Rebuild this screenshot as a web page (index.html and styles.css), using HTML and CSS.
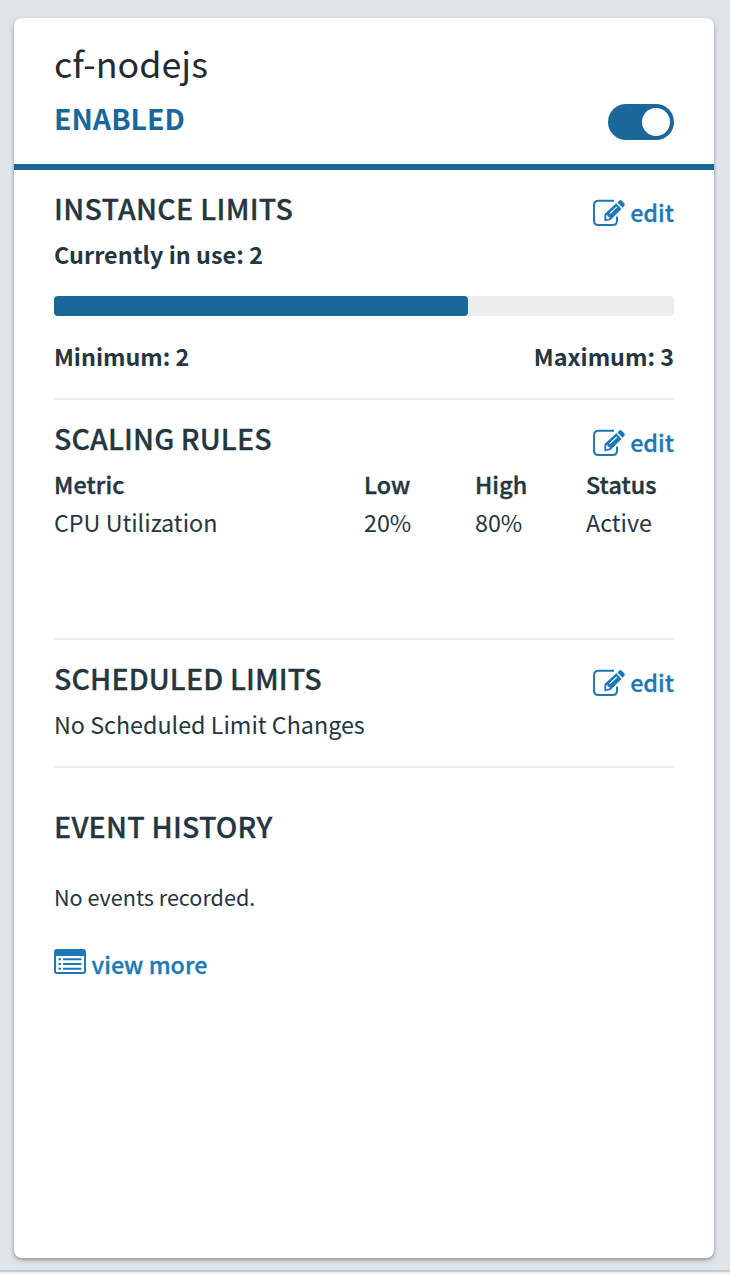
FILE: index.html
```html
<!DOCTYPE html>
<html lang="en">
<head>
<meta charset="utf-8">
<title>cf-nodejs</title>
<link rel="stylesheet" href="styles.css">
</head>
<body>
<svg class="sprite" width="0" height="0">
  <symbol id="edit" viewBox="0 0 34 28">
    <path d="M23 1.800H7.500Q3 1.800 3 6.300V21.500Q3 26 7.500 26H21.500Q26 26 26 21.500V17.500" fill="none" stroke="currentColor" stroke-width="2"/>
    <path fill="currentColor" fill-rule="evenodd" d="M13.500 15L25.300 4.300L30.500 9.900L19.500 20.900L13.300 22.300ZM16 15.500L15.200 17V20.300L18.400 19.500L18.900 18.300L17 17.700ZM18.300 14.300L19.100 15.100L26.300 8.200L25.500 7.400Z"/>
    <path fill="currentColor" d="M26.400 3.400L28.300 1.600Q29.600 .5 31 1.900L33.200 4.200Q34.300 5.600 33.200 6.900L31.600 8.800Z"/>
  </symbol>
</svg>
<main class="card">
  <header class="header">
    <h1 class="title">cf-nodejs</h1>
    <div class="state-row">
      <span class="state">ENABLED</span>
      <span class="toggle"><span class="knob"></span></span>
    </div>
  </header>
  <section class="section limits">
    <div class="heading-row"><h2 class="heading h-instance">INSTANCE LIMITS</h2><a class="edit"><svg class="edit-icon"><use href="#edit"/></svg><span>edit</span></a></div>
    <p class="bold use">Currently in use: 2</p>
    <div class="bar"><div class="fill"></div></div>
    <div class="range bold"><span>Minimum: 2</span><span>Maximum: 3</span></div>
  </section>
  <section class="section rules">
    <div class="heading-row"><h2 class="heading">SCALING RULES</h2><a class="edit"><svg class="edit-icon"><use href="#edit"/></svg><span>edit</span></a></div>
    <div class="grid semi"><span>Metric</span><span>Low</span><span>High</span><span>Status</span></div>
    <div class="grid"><span>CPU Utilization</span><span>20%</span><span>80%</span><span>Active</span></div>
  </section>
  <section class="section scheduled">
    <div class="heading-row"><h2 class="heading">SCHEDULED LIMITS</h2><a class="edit"><svg class="edit-icon"><use href="#edit"/></svg><span>edit</span></a></div>
    <p>No Scheduled Limit Changes</p>
  </section>
  <section class="events">
    <h2 class="heading h-events">EVENT HISTORY</h2>
    <p class="empty">No events recorded.</p>
    <a class="more"><svg class="list-icon" viewBox="0 0 32 25">
      <path fill="currentColor" fill-rule="evenodd" d="M3 0H29Q32 0 32 3V22Q32 25 29 25H3Q0 25 0 22V3Q0 0 3 0ZM2 7V22Q2 23 3 23H29Q30 23 30 22V7Z"/>
      <path d="M9 10.200H27.500M9 15H27.500M9 19.800H27.500" stroke="currentColor" stroke-width="2"/>
      <path d="M4.500 10.200H7M4.500 15H7M4.500 19.800H7" stroke="currentColor" stroke-width="2"/>
    </svg><span>view more</span></a>
  </section>
</main>
</body>
</html>
```
FILE: styles.css
```css
* { box-sizing: border-box; }
body {
  margin: 0;
  height: 1274px;
  padding: 18px 16px 0 14px;
  background: linear-gradient(#dfe4e8 0 1270px, #c9cbcd 1270px 1272px, #f1f1f1 1272px);
  color: #243640;
  font: 400 23.3px/38px "Noto Sans CJK SC", sans-serif;
  white-space: nowrap;
}
h1, h2, p { margin: 0; }
.sprite { position: absolute; }
.card {
  height: 1240px;
  background: #fff;
  border-radius: 8px;
  box-shadow: 0 2px 4px rgba(0, 0, 0, .35);
}
.header { height: 152px; padding: 18px 40px 0; border-bottom: 6px solid #1a6799; }
.title { font-size: 35.8px; line-height: 52px; font-weight: 400; color: #212b31; }
.state-row { display: flex; justify-content: space-between; margin-top: 10px; }
.state { font-size: 28.5px; line-height: 40px; font-weight: 700; color: #1a6799; }
.toggle {
  display: flex;
  justify-content: flex-end;
  width: 66px;
  height: 36px;
  margin-top: 6px;
  padding: 4px;
  border-radius: 18px;
  background: #1a6799;
}
.knob { width: 28px; height: 28px; border-radius: 50%; background: #fff; }
.section { margin: 0 40px; padding-top: 18px; border-bottom: 2px solid #ebeded; }
.limits { height: 230px; }
.rules { height: 240px; }
.scheduled { height: 128px; }
.heading-row { display: flex; justify-content: space-between; height: 47px; }
.heading {
  font-size: 28.6px;
  line-height: 40px;
  font-weight: 500;
  letter-spacing: .12px;
  -webkit-text-stroke: .3px currentColor;
}
.h-instance { letter-spacing: .3px; }
.h-events { letter-spacing: .22px; }
.bold { font-weight: 700; }
.use { letter-spacing: .05px; }
.semi { font-weight: 500; letter-spacing: .1px; -webkit-text-stroke: .4px currentColor; }
.edit, .more {
  display: flex;
  color: #1f78b4;
  font-weight: 500;
  -webkit-text-stroke: .3px currentColor;
}
.edit svg, .more svg { -webkit-text-stroke: 0; }
.edit { gap: 5px; padding-top: 5px; }
.edit-icon { width: 34px; height: 28px; margin-top: 6px; }
.bar { height: 20px; margin-top: 23px; border-radius: 4px; background: #eceeee; }
.fill { width: 414px; height: 20px; border-radius: 4px; background: #1a6799; }
.range { display: flex; justify-content: space-between; margin-top: 21px; }
.grid { display: grid; grid-template-columns: 310px 111px 111px 88px; }
.events { padding: 38px 40px 0; }
.empty { margin-top: 32px; font-size: 21.6px; }
.more { gap: 5.500px; margin-top: 29px; }
.list-icon { width: 32px; height: 25px; margin-top: 4px; }
```
